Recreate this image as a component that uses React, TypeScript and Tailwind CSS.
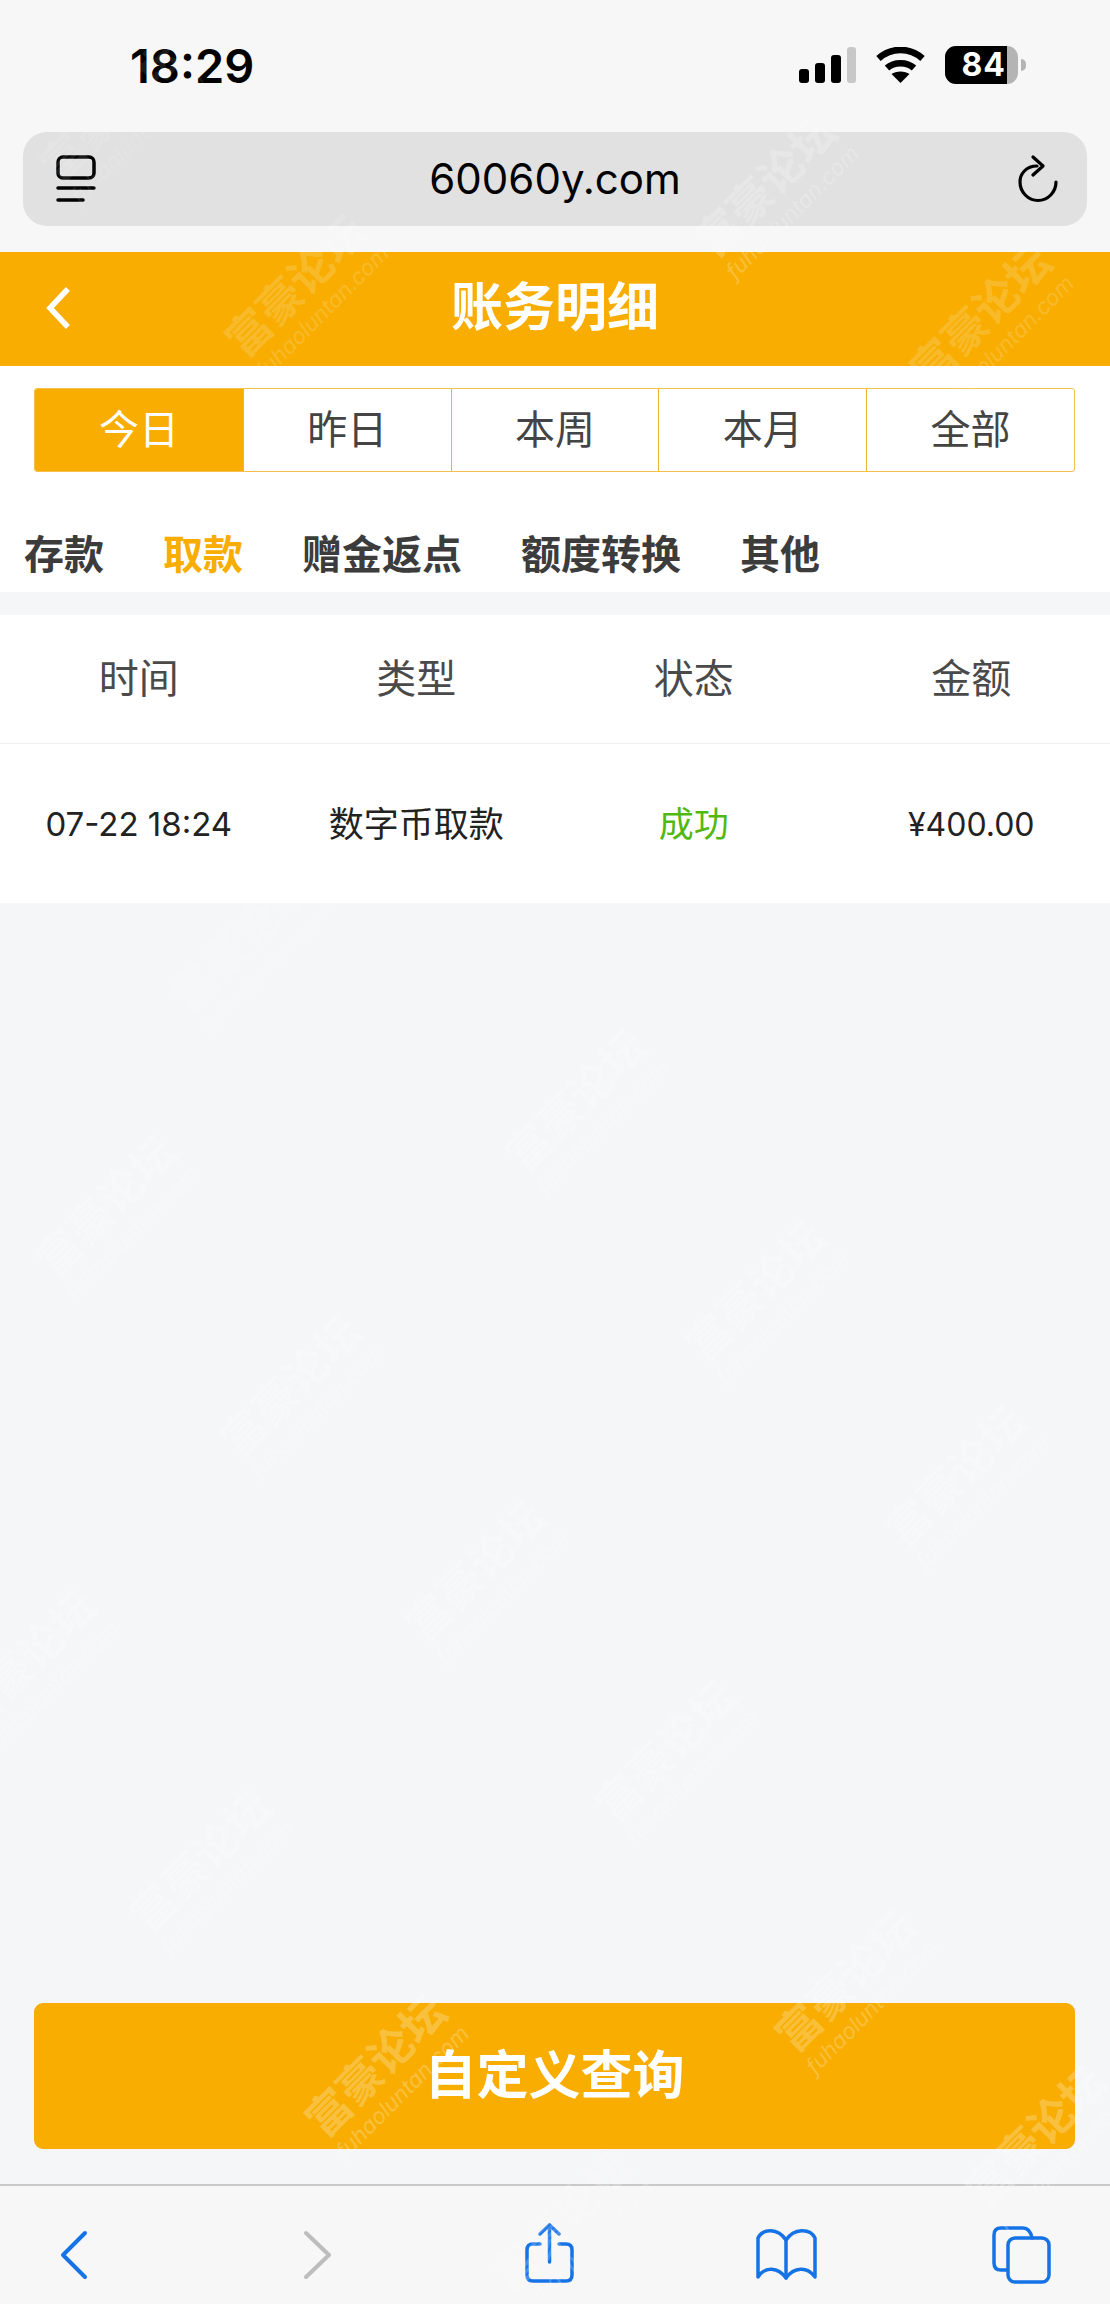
const cjk = "font-['Inter','Noto_Sans_CJK_SC',sans-serif]";

const ranges = ["今日", "昨日", "本周", "本月", "全部"];
const types = ["存款", "取款", "赠金返点", "额度转换", "其他"];
const columns = ["时间", "类型", "状态", "金额"];

// watermark centres, taken from the screenshot
const marks = [
  { x: 305, y: 295, o: 0.16 },
  { x: 990, y: 325, o: 0.16 },
  { x: 775, y: 195, o: 0.22 },
  { x: 120, y: 120, o: 0.1 },
  { x: 250, y: 950, o: 0.16 },
  { x: 585, y: 1110, o: 0.22 },
  { x: 115, y: 1215, o: 0.22 },
  { x: 300, y: 1395, o: 0.22 },
  { x: 765, y: 1300, o: 0.22 },
  { x: 965, y: 1485, o: 0.22 },
  { x: 485, y: 1580, o: 0.22 },
  { x: 35, y: 1670, o: 0.22 },
  { x: 675, y: 1760, o: 0.22 },
  { x: 210, y: 1870, o: 0.22 },
  { x: 385, y: 2075, o: 0.24 },
  { x: 855, y: 1990, o: 0.22 },
  { x: 1045, y: 2145, o: 0.24 },
  { x: 570, y: 2230, o: 0.2 },
];

function Watermark({ x, y, o }: { x: number; y: number; o: number }) {
  return (
    <div
      className="absolute -translate-x-1/2 -translate-y-1/2 -rotate-45 flex flex-col items-center leading-none text-white"
      style={{ left: x, top: y, opacity: o }}
    >
      <span className="text-[44px] font-bold whitespace-nowrap">富豪论坛</span>
      <span className="text-[22px] italic mt-1 whitespace-nowrap">fuhaoluntan.com</span>
    </div>
  );
}

function StatusIcons() {
  return (
    <div className="flex items-center">
      <svg width="57" height="36" viewBox="0 0 57 36" fill="#000">
        <rect x="0" y="22" width="10" height="14" rx="3" />
        <rect x="16" y="16" width="10" height="20" rx="3" />
        <rect x="32" y="8" width="10" height="28" rx="3" />
        <rect x="48" y="0" width="9" height="36" rx="3" fill="#c8c8c8" />
      </svg>
      <svg className="ml-5" width="49" height="36" viewBox="0 0 49 36" fill="none" stroke="#000" strokeWidth="6.5">
        <path d="M2.5 11.5 C15 0 34 0 46.5 11.5" />
        <path d="M11 21 C18 14.500 31 14.500 38 21" />
        <path d="M24.500 36 L15.500 27 C20 23.500 29 23.500 33.500 27 Z" fill="#000" stroke="none" />
      </svg>
      <div className="ml-5 flex items-center">
        <div className="w-[73px] h-[38px] rounded-[11px] overflow-hidden bg-[#b4b4b4]">
          <div className="h-full w-[62px] bg-black flex items-center justify-end pr-[1px] text-white text-[32px] font-bold tracking-[1px] leading-none">
            84
          </div>
        </div>
        <div className="ml-[3px] w-[5px] h-[12px] rounded-r-full bg-[#b4b4b4]" />
      </div>
    </div>
  );
}

function BrowserBar() {
  return (
    <div className="h-[94px] mx-[23px] rounded-[24px] bg-[#e1e1e1] flex items-center justify-between pl-[33px] pr-[29px] relative">
      <svg width="40" height="48" viewBox="0 0 40 48" fill="none" stroke="#000" strokeWidth="3.500" strokeLinecap="round">
        <rect x="2" y="2" width="36" height="21" rx="5" />
        <path d="M2 33 H38" />
        <path d="M2 45 H27" />
      </svg>
      <span className="absolute inset-x-0 text-center text-[42px] leading-none text-black">60060y.com</span>
      <svg width="40" height="48" viewBox="0 0 40 48" fill="none" stroke="#000" strokeWidth="3.200" strokeLinecap="round" strokeLinejoin="round">
        <path d="M19 11 C8 11 2 19 2 27 C2 37 10 45.500 20 45.500 C30 45.500 38 37 38 27" />
        <path d="M15 2 L25 11 L15 20" />
      </svg>
    </div>
  );
}

function BottomToolbar() {
  return (
    <div className="h-[120px] border-t-2 border-[#c9c9c9] bg-[#f7f7f7] relative">
      <svg className="absolute left-0 top-0" width="1110" height="118" viewBox="0 2186 1110 118" fill="none" strokeLinecap="round" strokeLinejoin="round">
        <path d="M85 2233 L63 2255 L85 2277" stroke="#1673e6" strokeWidth="4" />
        <path d="M306 2233 L329 2255 L306 2277" stroke="#bdbdbd" strokeWidth="4" />
        <g stroke="#1673e6" strokeWidth="3.500">
          <path d="M540 2244 H533 Q527 2244 527 2250 V2275 Q527 2281 533 2281 H566 Q572 2281 572 2275 V2250 Q572 2244 566 2244 H559" />
          <path d="M549.500 2262 V2225" />
          <path d="M540 2234 L549.500 2225 L559 2234" />
        </g>
        <g stroke="#1673e6" strokeWidth="3.500">
          <path d="M786 2240 C778 2228 763 2228 758 2238 V2277 C765 2266 778 2267 786 2278 C794 2267 807 2266 815 2277 V2238 C810 2228 794 2228 786 2240 Z" />
          <path d="M786 2240 V2278" />
        </g>
        <g stroke="#1673e6" strokeWidth="3.500">
          <path d="M1007 2270 H1001 Q994 2270 994 2263 V2235 Q994 2228 1001 2228 H1023 Q1030 2228 1032 2238" />
          <rect x="1008" y="2238" width="41" height="44" rx="7" />
        </g>
      </svg>
    </div>
  );
}

export default function App() {
  return (
    <div className={`relative w-[1110px] h-[2304px] overflow-hidden flex flex-col bg-[#f5f6f8] ${cjk}`}>
      <div className="h-[252px] bg-[#f7f7f7]">
        <div className="h-[132px] flex justify-between pl-[130px] pr-[84px] pt-[42px]">
          <span className="text-[47px] font-semibold leading-[48px] text-black">18:29</span>
          <div className="h-[48px] mt-[4px]">
            <StatusIcons />
          </div>
        </div>
        <BrowserBar />
      </div>

      <div className="h-[114px] bg-[#f8ad00] relative flex items-center justify-center">
        <svg className="absolute left-[44px] top-[34px]" width="28" height="44" viewBox="0 0 28 44" fill="none" stroke="#fff" strokeWidth="5.500" strokeLinecap="square">
          <path d="M22 5 L6 22 L22 39" />
        </svg>
        <h1 className="text-[52px] font-semibold leading-none text-white -mt-[2px]">账务明细</h1>
      </div>

      <div className="bg-white h-[226px]">
        <div className="pt-[22px] pl-[34px] pr-[35px]">
          <div className="grid grid-cols-5 h-[84px] border border-[#f5c04a] rounded-[3px] overflow-hidden">
            {ranges.map((r, i) => (
              <div
                key={r}
                className={
                  i === 0
                    ? "flex items-center justify-center bg-[#f8ad00] text-white text-[40px]"
                    : "flex items-center justify-center border-l border-[#f0b52e] text-[#444] text-[40px]"
                }
              >
                {r}
              </div>
            ))}
          </div>
        </div>
        <div className="flex gap-[59px] pl-[24px] pt-[51px]">
          {types.map((t) => (
            <span
              key={t}
              className={
                t === "取款"
                  ? "text-[40px] font-semibold leading-[64px] text-[#f8ad00]"
                  : "text-[40px] font-semibold leading-[64px] text-[#3c3c3c]"
              }
            >
              {t}
            </span>
          ))}
        </div>
      </div>

      <div className="mt-[23px] bg-white">
        <div className="grid grid-cols-4 h-[129px] border-b border-[#eeeeee] items-center text-center text-[40px] text-[#4a4a4a]">
          {columns.map((c) => (
            <div key={c}>{c}</div>
          ))}
        </div>
        <div className="grid grid-cols-4 h-[159px] pt-[2px] items-center text-center text-[35px] text-[#222]">
          <div className="text-[33px]">07-22 18:24</div>
          <div>数字币取款</div>
          <div className="text-[#52b812]">成功</div>
          <div className="text-[32px]">¥400.00</div>
        </div>
      </div>

      <div className="flex-1 flex flex-col justify-end pl-[34px] pr-[35px] pb-[35px]">
        <button className="h-[146px] rounded-[9px] bg-[#f8ad00] text-white text-[52px] font-semibold">
          自定义查询
        </button>
      </div>

      <BottomToolbar />

      <div className="absolute inset-0 pointer-events-none">
        {marks.map((m) => (
          <Watermark key={`${m.x}-${m.y}`} {...m} />
        ))}
      </div>
    </div>
  );
}
